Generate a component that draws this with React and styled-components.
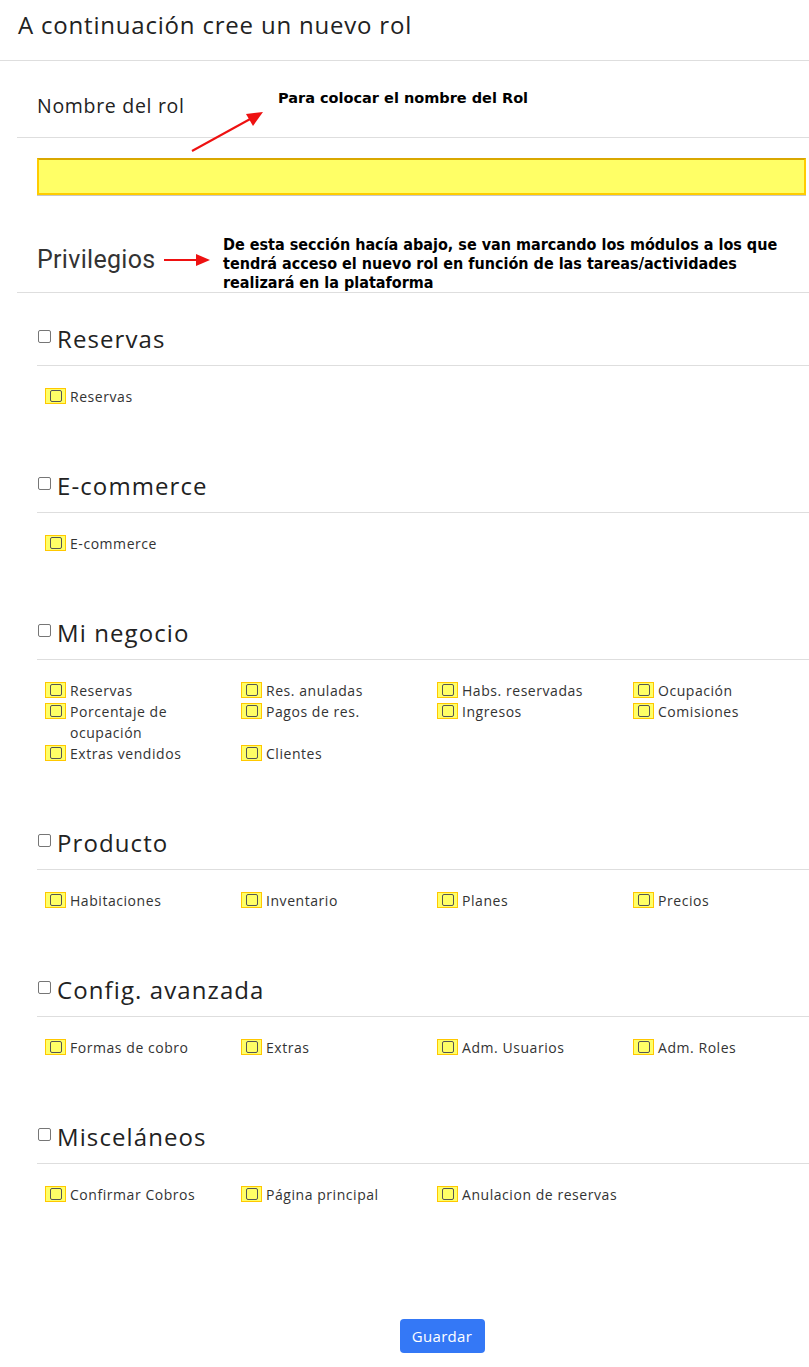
import styled, { createGlobalStyle } from "styled-components";

const Global = createGlobalStyle`
  html, body {
    margin: 0;
    padding: 0;
    background: #fff;
    overflow-x: hidden;
  }
  body {
    font-family: "Open Sans", "Liberation Sans", sans-serif;
    color: #212529;
  }
`;

const sections = [
  { title: "Reservas", items: ["Reservas"] },
  { title: "E-commerce", items: ["E-commerce"] },
  {
    title: "Mi negocio",
    items: [
      "Reservas",
      "Res. anuladas",
      "Habs. reservadas",
      "Ocupación",
      "Porcentaje de ocupación",
      "Pagos de res.",
      "Ingresos",
      "Comisiones",
      "Extras vendidos",
      "Clientes",
    ],
  },
  { title: "Producto", items: ["Habitaciones", "Inventario", "Planes", "Precios"] },
  { title: "Config. avanzada", items: ["Formas de cobro", "Extras", "Adm. Usuarios", "Adm. Roles"] },
  { title: "Misceláneos", items: ["Confirmar Cobros", "Página principal", "Anulacion de reservas"] },
];

export default function App() {
  return (
    <Page>
      <Global />
      <Header>A continuación cree un nuevo rol</Header>
      <Body>
        <FieldRow>Nombre del rol</FieldRow>
        <NameInput type="text" />
        <PrivRow>Privilegios</PrivRow>

        {sections.map((s) => (
          <Section key={s.title}>
            <SectionHead>
              <Box />
              <SectionTitle>{s.title}</SectionTitle>
            </SectionHead>
            <Items>
              {s.items.map((it) => (
                <Item key={it}>
                  <Mark>
                    <Inner />
                  </Mark>
                  <Label>{it}</Label>
                </Item>
              ))}
            </Items>
          </Section>
        ))}

        <Footer>
          <SaveButton>Guardar</SaveButton>
        </Footer>
      </Body>

      <Note1>Para colocar el nombre del Rol</Note1>
      <Arrow1 width="80" height="45" viewBox="0 0 80 45">
        <line x1="2" y1="43" x2="62" y2="10" stroke="#ee1111" strokeWidth="2" />
        <polygon points="73,4 56,6 63,18" fill="#ee1111" />
      </Arrow1>

      <Note2>
        De esta sección hacía abajo, se van marcando los módulos a los que
        <br />
        tendrá acceso el nuevo rol en función de las tareas/actividades
        <br />
        realizará en la plataforma
      </Note2>
      <Arrow2 width="48" height="14" viewBox="0 0 48 14">
        <line x1="0" y1="7" x2="34" y2="7" stroke="#ee1111" strokeWidth="2" />
        <polygon points="46,7 32,1 32,13" fill="#ee1111" />
      </Arrow2>
    </Page>
  );
}

const Page = styled.div`
  position: relative;
  width: 884px;
  height: 1367px;
  overflow: hidden;
`;

const Header = styled.div`
  height: 61px;
  box-sizing: border-box;
  padding-left: 18px;
  padding-bottom: 11px;
  display: flex;
  align-items: center;
  font-size: 24px;
  letter-spacing: 0.8px;
  color: #222;
  border-bottom: 1px solid #dedede;
`;

const Body = styled.div`
  padding-left: 17px;
`;

const FieldRow = styled.div`
  height: 77px;
  box-sizing: border-box;
  padding-left: 20px;
  padding-top: 12px;
  display: flex;
  align-items: center;
  font-size: 19.5px;
  letter-spacing: 0.7px;
  color: #222;
  border-bottom: 1px solid #dedede;
`;

const NameInput = styled.input`
  display: block;
  margin: 20px 0 0 20px;
  width: 769px;
  height: 37px;
  box-sizing: border-box;
  background: #ffff66;
  border: 2px solid #ffcc00;
  border-top-color: #d9a800;
  outline: none;
  box-shadow: 0 1px 0 #c8c8c8;
`;

const PrivRow = styled.div`
  margin-top: 41px;
  height: 57px;
  box-sizing: border-box;
  padding-left: 20px;
  display: flex;
  align-items: center;
  padding-bottom: 10px;
  font-family: Roboto, "Open Sans", sans-serif;
  font-size: 25px;
  letter-spacing: 0.3px;
  color: #333;
  border-bottom: 1px solid #dedede;
`;

const Section = styled.div`
  margin-left: 20px;
  margin-top: 23px;
  & + & {
    margin-top: 56px;
  }
`;

const SectionHead = styled.div`
  height: 50px;
  box-sizing: border-box;
  padding-bottom: 5px;
  display: flex;
  align-items: center;
  gap: 6px;
  border-bottom: 1px solid #dedede;
`;

const Box = styled.span`
  width: 11px;
  height: 11px;
  border: 1px solid #767676;
  border-radius: 2px;
  align-self: center;
  margin-top: -3px;
  margin-left: 1px;
`;

const SectionTitle = styled.span`
  font-size: 24px;
  letter-spacing: 1.1px;
  color: #222;
`;

const Items = styled.div`
  display: grid;
  grid-template-columns: repeat(4, 196px);
  margin-top: 20px;
  padding-left: 8px;
`;

const Item = styled.label`
  display: flex;
  align-items: flex-start;
  min-height: 21px;
`;

const Mark = styled.span`
  flex: none;
  width: 21px;
  height: 16px;
  margin-top: 2px;
  box-sizing: border-box;
  background: #ffff66;
  border: 1px solid #ffc800;
  display: flex;
  align-items: center;
  justify-content: center;
`;

const Inner = styled.span`
  width: 12px;
  height: 12px;
  box-sizing: border-box;
  border: 1px solid #555;
  border-radius: 2px;
`;

const Label = styled.span`
  margin-left: 4px;
  font-size: 14px;
  letter-spacing: 0.55px;
  line-height: 21px;
  color: #333;
  max-width: 162px;
`;

const Footer = styled.div`
  display: flex;
  justify-content: center;
  padding-top: 114px;
  padding-right: 17px;
`;

const SaveButton = styled.button`
  width: 85px;
  height: 34px;
  border: none;
  border-radius: 4px;
  background: #3478f6;
  color: #fff;
  font-family: "Open Sans", sans-serif;
  font-size: 15px;
  letter-spacing: 0.3px;
`;

const Note1 = styled.div`
  position: absolute;
  left: 278px;
  top: 90px;
  font-family: "DejaVu Sans", Verdana, sans-serif;
  font-weight: bold;
  font-size: 14.5px;
  color: #000;
`;

const Note2 = styled.div`
  position: absolute;
  left: 223px;
  top: 235px;
  font-family: "DejaVu Sans Condensed", "DejaVu Sans", sans-serif;
  font-stretch: condensed;
  font-weight: bold;
  font-size: 16px;
  line-height: 19px;
  color: #000;
`;

const Arrow1 = styled.svg`
  position: absolute;
  left: 190px;
  top: 108px;
`;

const Arrow2 = styled.svg`
  position: absolute;
  left: 164px;
  top: 253px;
`;
